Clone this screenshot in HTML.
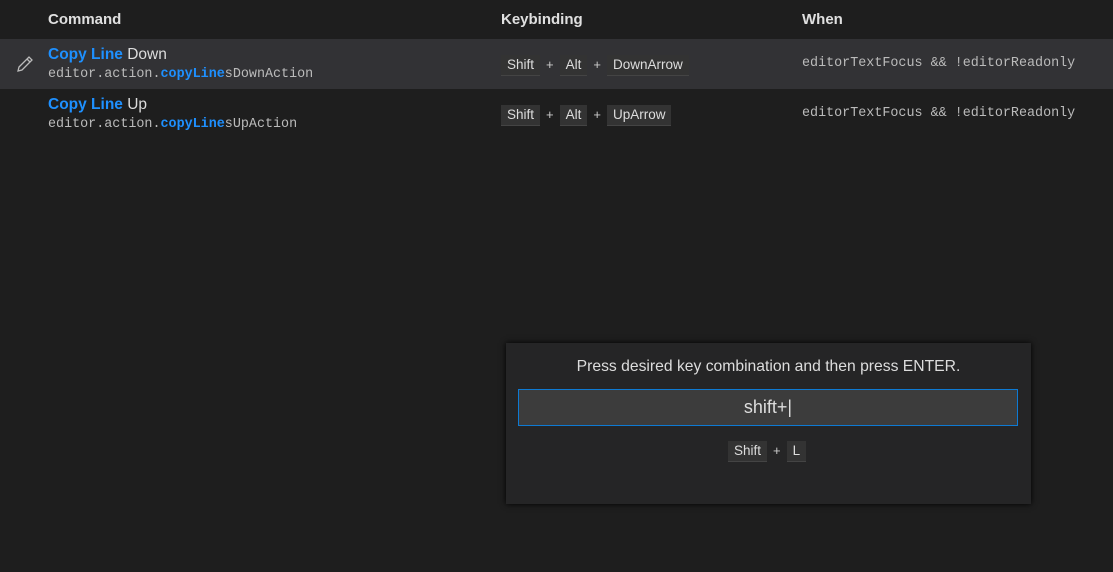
<!DOCTYPE html>
<html><head><style>
body{margin:0;width:1113px;height:572px;background:#1e1e1e;font-family:"Liberation Sans",sans-serif;color:#ccc;position:relative;overflow:hidden}
.a{position:absolute;white-space:nowrap}
.h{font-weight:bold;font-size:15px;color:#e0e0e0;top:11px}
.t{font-size:15.5px;color:#ddd}
.b{color:#1e90ff;font-weight:bold}
.m{font-family:"Liberation Mono",monospace;font-size:13.4px;color:#bbb}
.k{display:inline-block;background:#333;border-bottom:1px solid #444;padding:2px 6px;font-size:13.5px;color:#ddd;line-height:16px}
.p{font-size:13px;color:#ccc;margin:0 6px}
</style></head><body>
<div class="a h" style="left:48px">Command</div>
<div class="a h" style="left:501px">Keybinding</div>
<div class="a h" style="left:802px">When</div>
<div class="a" style="left:0;top:39px;width:1113px;height:50px;background:#323235"></div>
<svg class="a" style="left:15px;top:54px" width="20" height="20" viewBox="0 0 20 20"><path d="M3 17l1-4L14 3l3 3L7 16z M12 5l3 3" fill="none" stroke="#bbb" stroke-width="1.3"/></svg>
<div class="a t" style="left:48px;top:46px"><span class="b">Copy Line</span> Down</div>
<div class="a m" style="left:48px;top:67px">editor.action.<span class="b">copyLine</span>sDownAction</div>
<div class="a" style="left:501px;top:55px"><span class="k">Shift</span><span class="p">+</span><span class="k">Alt</span><span class="p">+</span><span class="k">DownArrow</span></div>
<div class="a m" style="left:802px;top:56px">editorTextFocus &amp;&amp; !editorReadonly</div>
<div class="a t" style="left:48px;top:96px"><span class="b">Copy Line</span> Up</div>
<div class="a m" style="left:48px;top:117px">editor.action.<span class="b">copyLine</span>sUpAction</div>
<div class="a" style="left:501px;top:105px"><span class="k">Shift</span><span class="p">+</span><span class="k">Alt</span><span class="p">+</span><span class="k">UpArrow</span></div>
<div class="a m" style="left:802px;top:106px">editorTextFocus &amp;&amp; !editorReadonly</div>
<div class="a" style="left:506px;top:343px;width:525px;height:161px;background:#252526;box-shadow:0 0 6px #000"></div>
<div class="a" style="left:506px;top:358px;width:525px;text-align:center;font-size:15.7px;color:#ddd">Press desired key combination and then press ENTER.</div>
<div class="a" style="left:518px;top:389px;width:498px;height:35px;background:#3c3c3c;border:1px solid #0e7ad3;text-align:center;line-height:35px;font-size:18px;color:#ddd">shift+|</div>
<div class="a" style="left:728px;top:441px"><span class="k">Shift</span><span class="p">+</span><span class="k">L</span></div>
</body></html>
